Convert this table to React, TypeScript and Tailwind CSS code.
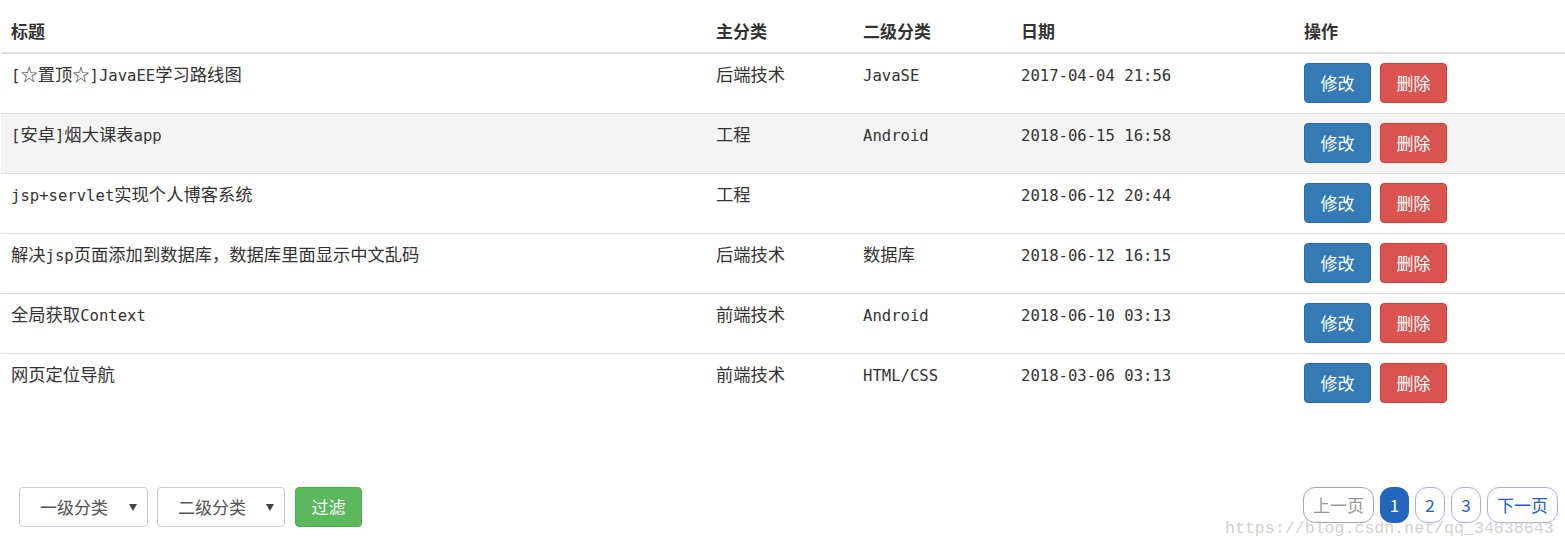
import React from "react";

interface Post {
  title: string;
  main: string;
  sub: string;
  date: string;
}

const POSTS: Post[] = [
  { title: "[☆置顶☆]JavaEE学习路线图", main: "后端技术", sub: "JavaSE", date: "2017-04-04 21:56" },
  { title: "[安卓]烟大课表app", main: "工程", sub: "Android", date: "2018-06-15 16:58" },
  { title: "jsp+servlet实现个人博客系统", main: "工程", sub: "", date: "2018-06-12 20:44" },
  { title: "解决jsp页面添加到数据库，数据库里面显示中文乱码", main: "后端技术", sub: "数据库", date: "2018-06-12 16:15" },
  { title: "全局获取Context", main: "前端技术", sub: "Android", date: "2018-06-10 03:13" },
  { title: "网页定位导航", main: "前端技术", sub: "HTML/CSS", date: "2018-03-06 03:13" },
];

const COLS = "grid grid-cols-[705px_147px_158px_283px_1fr]";

// latin runs get the narrow mono face, CJK runs stay in the sans face
function Mixed({ text }: { text: string }) {
  const parts = text.split(/([\x20-\x7E]+)/).filter((p) => p.length > 0);
  return (
    <>
      {parts.map((p, i) =>
        /^[\x20-\x7E]+$/.test(p) ? (
          <span key={i} className="font-['DejaVu_Sans_Mono',monospace] text-[15.6px]">
            {p}
          </span>
        ) : (
          <span key={i}>{p}</span>
        )
      )}
    </>
  );
}

function Cell({ children }: { children: React.ReactNode }) {
  return <div className="pl-[10px] pt-[9px] leading-[22px] whitespace-nowrap text-[17.3px]">{children}</div>;
}

function SelectBox({ label, w }: { label: string; w: string }) {
  return (
    <div className={`flex items-center ${w} h-[40px] border border-[#ccc] rounded-[4px] bg-white pl-[20px] pr-[10px] text-[17px] text-[#555]`}>
      <span className="flex-1">{label}</span>
      <span className="w-0 h-0 border-l-[4px] border-r-[4px] border-t-[7px] border-l-transparent border-r-transparent border-t-[#444]" />
    </div>
  );
}

export default function App() {
  return (
    <div className="relative w-[1565px] h-[549px] overflow-hidden bg-white text-[#333] font-['Noto_Sans_CJK_SC','Microsoft_YaHei',sans-serif] text-[17px]">
      {/* table */}
      <div className="ml-px">
        <div className={`${COLS} h-[54px] border-b-2 border-[#ddd] font-bold`}>
          {["标题", "主分类", "二级分类", "日期", "操作"].map((h) => (
            <div key={h} className="pl-[10px] pt-[20px] leading-[22px]">
              {h}
            </div>
          ))}
        </div>
        {POSTS.map((p, i) => (
          <div
            key={i}
            className={`${COLS} h-[60px] ${i < POSTS.length - 1 ? "border-b border-[#ddd]" : ""} ${i === 1 ? "bg-[#f4f4f4]" : ""}`}
          >
            <Cell>
              <Mixed text={p.title} />
            </Cell>
            <Cell>
              <Mixed text={p.main} />
            </Cell>
            <Cell>
              <Mixed text={p.sub} />
            </Cell>
            <Cell>
              <Mixed text={p.date} />
            </Cell>
            <div className="pl-[10px] pt-[9px] flex gap-[9px]">
              <button className="w-[67px] h-[40px] rounded-[4px] bg-[#337ab7] border border-[#2e6da4] text-white text-[17px]">
                修改
              </button>
              <button className="w-[67px] h-[40px] rounded-[4px] bg-[#d9534f] border border-[#d43f3a] text-white text-[17px]">
                删除
              </button>
            </div>
          </div>
        ))}
      </div>

      {/* footer: filters + pager */}
      <div className="flex justify-between items-start mt-[73px] pl-[19px] pr-[7px]">
        <div className="flex">
          <SelectBox label="一级分类" w="w-[129px]" />
          <div className="ml-[9px]">
            <SelectBox label="二级分类" w="w-[128px]" />
          </div>
          <button className="ml-[10px] w-[67px] h-[40px] rounded-[4px] bg-[#5cb85c] border border-[#4cae4c] text-white text-[17px]">
            过滤
          </button>
        </div>
        <div className="flex gap-[6px] text-[17px]">
          <span className="flex items-center justify-center w-[71px] h-[36px] rounded-[12px] border border-[#a6a6a6] text-[#999]">
            上一页
          </span>
          <span className="flex items-center justify-center w-[29px] h-[36px] rounded-[12px] bg-[#2366bd] text-white">
            1
          </span>
          <span className="flex items-center justify-center w-[30px] h-[36px] rounded-[12px] border border-[#aaaaf5] text-[#1d5fc2]">
            2
          </span>
          <span className="flex items-center justify-center w-[30px] h-[36px] rounded-[12px] border border-[#aaaaf5] text-[#1d5fc2]">
            3
          </span>
          <span className="flex items-center justify-center w-[71px] h-[36px] rounded-[12px] border border-[#aaaaf5] text-[#1d5fc2]">
            下一页
          </span>
        </div>
      </div>

      {/* watermark */}
      <div className="absolute left-[1225px] top-[518px] font-['Liberation_Mono',monospace] text-[16.6px] leading-[22px] text-[#c4c4c4]/80 pointer-events-none">
        https://blog.csdn.net/qq_34838643
      </div>
    </div>
  );
}
